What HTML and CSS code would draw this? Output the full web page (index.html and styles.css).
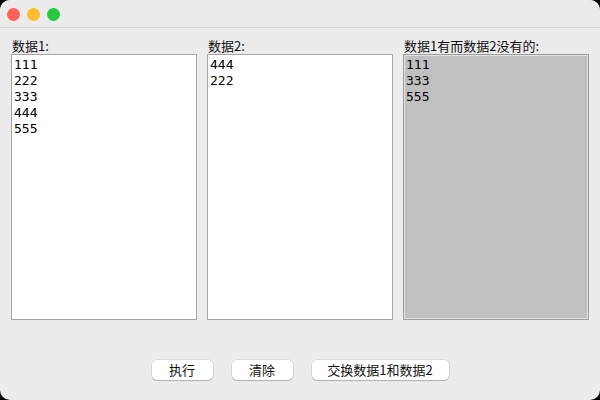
FILE: index.html
```html
<!DOCTYPE html>
<html lang="zh">
<head>
<meta charset="utf-8">
<link rel="stylesheet" href="styles.css">
</head>
<body>
<div class="window">
  <div class="titlebar">
    <span class="light red"></span>
    <span class="light yellow"></span>
    <span class="light green"></span>
  </div>
  <div class="content">
    <div class="columns">
      <div class="col">
        <div class="label">数据1:</div>
        <div class="area">111
222
333
444
555</div>
      </div>
      <div class="col">
        <div class="label">数据2:</div>
        <div class="area">444
222</div>
      </div>
      <div class="col">
        <div class="label">数据1有而数据2没有的:</div>
        <div class="area result">111
333
555</div>
      </div>
    </div>
    <div class="buttons">
      <button class="btn w61">执行</button>
      <button class="btn w61">清除</button>
      <button class="btn w137">交换数据1和数据2</button>
    </div>
  </div>
</div>
</body>
</html>
```
FILE: styles.css
```css
html, body {
  margin: 0;
  padding: 0;
  background: #000;
}
.window {
  width: 600px;
  height: 400px;
  background: #ececec;
  border-radius: 10px;
  overflow: hidden;
  font-family: "Noto Sans CJK SC", "Noto Sans", sans-serif;
  color: #111;
}
.titlebar {
  height: 28px;
  box-sizing: border-box;
  border-bottom: 1px solid #d6d6d6;
  background: #ebebeb;
  display: flex;
  align-items: center;
  padding-left: 7px;
  gap: 7px;
}
.light {
  width: 13px;
  height: 13px;
  border-radius: 50%;
  margin-top: 1px;
}
.red { background: #fe5f57; }
.yellow { background: #febc2e; }
.green { background: #28c840; }
.content {
  padding: 10px 11px 0 11px;
}
.columns {
  display: flex;
  gap: 10px;
}
.col {
  width: 186px;
  display: flex;
  flex-direction: column;
}
.label {
  font-size: 13px;
  line-height: 16px;
  height: 16px;
  padding-left: 1px;
}
.area {
  height: 266px;
  box-sizing: border-box;
  border: 1px solid #a4a4a4;
  background: #fff;
  white-space: pre;
  font-family: "DejaVu Sans Mono", monospace;
  font-size: 13px;
  line-height: 16px;
  padding: 2px 2px;
  color: #000;
}
.result {
  background: #c0c0c0;
  box-shadow: inset 0 0 0 1px #e2e2e2;
  border-color: #9c9c9c;
}
.buttons {
  display: flex;
  justify-content: center;
  gap: 19px;
  margin-top: 40px;
}
.btn {
  height: 20px;
  box-sizing: border-box;
  background: #fff;
  border: none;
  border-radius: 5px;
  box-shadow: 0 0 0 0.5px rgba(0,0,0,0.15), 0 1px 1px rgba(0,0,0,0.2);
  font-family: "Noto Sans CJK SC", sans-serif;
  font-size: 13px;
  line-height: 20px;
  padding: 0;
  color: #111;
}
.w61 { width: 61px; }
.w137 { width: 137px; }
```
